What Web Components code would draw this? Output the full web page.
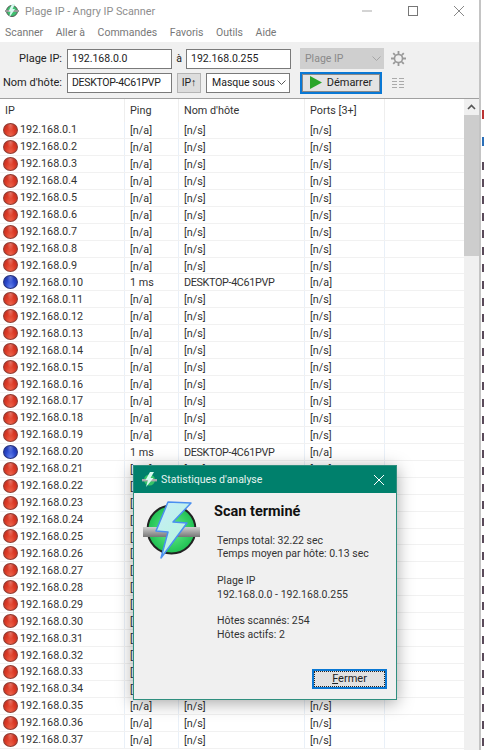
<!DOCTYPE html>
<html>
<head>
<meta charset="utf-8">
<title>Angry IP Scanner</title>
<style>
  html, body { margin: 0; height: 750px; overflow: hidden; background: #fff; }
  body { font: 10.5px Roboto, "Open Sans", sans-serif; color: #333; }
  #page { display: flex; height: 750px; position: relative; }
</style>
</head>
<body>
<div id="page">
  <ipscan-window></ipscan-window>
  <back-sliver></back-sliver>
  <scan-dialog></scan-dialog>
</div>

<script>
class IpscanWindow extends HTMLElement {
  connectedCallback() {
    this.attachShadow({ mode: 'open' }).innerHTML = `
      <style>
        :host { display: flex; flex-direction: column; width: 479px; height: 750px; background: #fff; }
        .title { height: 22px; display: flex; align-items: center; padding-left: 5px; gap: 6px; color: #8e8e8e; font-size: 10.8px; }
        .title .name { flex: 1; }
        .winbtn { width: 40px; height: 22px; display: flex; align-items: center; justify-content: center; }
        .menu { height: 20px; display: flex; align-items: center; padding-left: 5px; gap: 12.5px; color: #777; }
      </style>
      <div class="title">
        <svg width="14" height="14" viewBox="0 0 14 14"><circle cx="7" cy="7" r="5.5" fill="#3fbf6f" stroke="#555"/><rect x="0" y="6" width="14" height="2" fill="#999"/><path d="M7 0 L10 0 L7.5 5 L10 5 L4 14 L5.5 7.5 L3.5 7.5 Z" fill="#d7fbf0"/></svg>
        <span class="name">Plage IP - Angry IP Scanner</span>
        <span class="winbtn"><svg width="10" height="10"><rect y="4.5" width="10" height="1" fill="#aaa"/></svg></span>
        <span class="winbtn"><svg width="10" height="10"><rect x=".5" y=".5" width="9" height="9" fill="none" stroke="#777"/></svg></span>
        <span class="winbtn"><svg width="10" height="10"><path d="M0 0 L10 10 M10 0 L0 10" stroke="#888" fill="none"/></svg></span>
      </div>
      <div class="menu"><span>Scanner</span><span>Aller à</span><span>Commandes</span><span>Favoris</span><span>Outils</span><span>Aide</span></div>
      <scan-toolbar></scan-toolbar>
      <result-table></result-table>
    `;
  }
}

class ScanToolbar extends HTMLElement {
  connectedCallback() {
    this.attachShadow({ mode: 'open' }).innerHTML = `
      <style>
        :host { display: flex; flex-direction: column; gap: 3px; height: 56px; box-sizing: border-box; padding: 6px 0 0 0; background: #f0f0f0; color: #222; }
        .row { display: flex; align-items: center; height: 21px; white-space: nowrap; }
        .lbl { width: 62px; text-align: right; margin-right: 5px; font-size: 11px; }
        .inp { box-sizing: border-box; height: 20px; border: 1px solid #7a7a7a; background: #fff; padding: 0 4px; line-height: 18px; width: 105px; }
        .host { letter-spacing: -.3px; }
        .a { width: 14px; text-align: center; }
        .combo { box-sizing: border-box; height: 20px; border: 1px solid #7a7a7a; background: #fff; display: flex; align-items: center; justify-content: space-between; padding: 0 3px 0 5px; }
        .dis { width: 84px; height: 21px; margin-left: 9px; background: #cfcfcf; border: 0; color: #8a8a8a; }
        .ipup { box-sizing: border-box; width: 24px; height: 20px; margin: 0 5px 0 5px; background: #ddd; border: 1px solid #b4b4b4; text-align: center; line-height: 18px; }
        .start { box-sizing: border-box; width: 82px; height: 22px; margin-left: 10px; background: #e3e3e3; border: 2px solid #0a78d4; display: flex; align-items: center; justify-content: center; gap: 5px; font-size: 11px; outline: 1px solid #888; outline-offset: -3px; }
        svg { display: block; }
      </style>
      <div class="row">
        <span class="lbl">Plage IP:</span><span class="inp">192.168.0.0</span>
        <span class="a">à</span><span class="inp">192.168.0.255</span>
        <span class="combo dis">Plage IP
          <svg width="9" height="6"><path d="M.5 .5 L4.5 4.5 L8.5 .5" fill="none" stroke="#a5a5a5"/></svg></span>
        <svg style="margin-left:7px" width="15" height="15" viewBox="0 0 15 15"><circle cx="7.5" cy="7.5" r="4" fill="none" stroke="#999" stroke-width="1.6"/><path d="M7.5 0 V3 M7.5 12 V15 M0 7.5 H3 M12 7.5 H15 M2.2 2.2 L4.2 4.2 M10.8 10.8 L12.8 12.8 M12.8 2.2 L10.8 4.2 M4.2 10.8 L2.2 12.8" stroke="#999" stroke-width="1.8"/></svg>
      </div>
      <div class="row">
        <span class="lbl">Nom d'hôte:</span><span class="inp host">DESKTOP-4C61PVP</span>
        <span class="ipup">IP↑</span>
        <span class="combo" style="width:84px">Masque sous
          <svg width="9" height="6"><path d="M.5 .5 L4.5 4.5 L8.5 .5" fill="none" stroke="#555"/></svg></span>
        <span class="start">
          <svg width="12" height="13"><path d="M0 0 L12 6.5 L0 13 Z" fill="#2aa52a"/></svg>
          Démarrer</span>
        <svg style="margin-left:10px" width="12" height="10"><path d="M0 .5 H5 M7 .5 H12 M0 3.5 H5 M7 3.5 H12 M0 6.5 H5 M7 6.5 H12 M0 9.5 H5 M7 9.5 H12" stroke="#aaa"/></svg>
      </div>
    `;
  }
}

class ResultTable extends HTMLElement {
  connectedCallback() {
    const alive = { 10: 1, 20: 1 };
    let rows = '';
    for (let i = 1; i <= 37; i++) {
      const on = alive[i];
      rows += `<div class="r">
        <div class="c ip"><span class="dot ${on ? 'blue' : ''}"></span>192.168.0.${i}</div>
        <div class="c">${on ? '1 ms' : '[n/a]'}</div>
        <div class="c ${on ? 'host' : ''}">${on ? 'DESKTOP-4C61PVP' : '[n/s]'}</div>
        <div class="c">${on ? '[n/a]' : '[n/s]'}</div>
        <div></div>
      </div>`;
    }
    this.attachShadow({ mode: 'open' }).innerHTML = `
      <style>
        :host { display: flex; flex: 1; min-height: 0; border-top: 1px solid #a0a0a0; color: #333; overflow: hidden; }
        .list { flex: 1; min-width: 0; overflow: hidden; }
        .r { display: grid; grid-template-columns: 125px 54px 126px 80px 1fr; height: 16.94px; box-sizing: border-box; border-bottom: 1px solid #f1f1f1; line-height: 17px; white-space: nowrap; font-size: 10.8px; }
        .head { height: 23px; border-bottom: 0; line-height: 24px; }
        .c { padding-left: 5px; border-right: 1px solid #e9f0f8; overflow: hidden; }
        .host { letter-spacing: -.35px; }
        .head .c { border-right-color: #eee; }
        .ip { padding-left: 3px; display: flex; align-items: center; gap: 2px; }
        .dot { width: 15px; height: 14px; flex: none; border-radius: 50%; box-sizing: border-box; border: 1px solid #8f3a30;
          background: radial-gradient(ellipse at 50% 10%, rgba(255,255,255,.3) 0, transparent 38%), radial-gradient(ellipse at 50% 110%, #ee6a50 0, #dc3a26 55%, #b92a1e 100%); }
        .dot.blue { border-color: #24307e; background: radial-gradient(ellipse at 50% 10%, rgba(255,255,255,.3) 0, transparent 38%), radial-gradient(ellipse at 50% 110%, #6f8cf0 0, #2a48cc 55%, #1c2b94 100%); }
        .bar { width: 15px; flex: none; background: #f0f0f0; display: flex; flex-direction: column; }
        .bar .up { height: 16px; display: flex; align-items: center; justify-content: center; }
        .bar .thumb { height: 141px; background: #cdcdcd; }
      </style>
      <div class="list">
        <div class="r head"><div class="c">IP</div><div class="c">Ping</div><div class="c">Nom d'hôte</div><div class="c">Ports [3+]</div><div></div></div>
        ${rows}
      </div>
      <div class="bar">
        <div class="up"><svg width="9" height="6"><path d="M1 5 L4.5 1.5 L8 5" fill="none" stroke="#555" stroke-width="1.6"/></svg></div>
        <div class="thumb"></div>
      </div>
    `;
  }
}

class BackSliver extends HTMLElement {
  connectedCallback() {
    this.attachShadow({ mode: 'open' }).innerHTML = `
      <style>
        :host { display: flex; flex: 1; border-left: 2px solid #c4c4c4; background: #fff; }
        .ticks { flex: 1; margin: 110px 0 0 1px;
          background:
            linear-gradient(#b33 0 9px, transparent 9px) 0 0 / 100% 17px no-repeat,
            linear-gradient(#2a6fb8 0 9px, transparent 9px) 0 27px / 100% 17px no-repeat,
            repeating-linear-gradient(#5a4a5a 0 8px, transparent 8px 16.94px) 0 52px / 100% 100% no-repeat; }
      </style>
      <div class="ticks"></div>
    `;
  }
}

class ScanDialog extends HTMLElement {
  connectedCallback() {
    this.attachShadow({ mode: 'open' }).innerHTML = `
      <style>
        :host { position: absolute; left: 133px; top: 465px; width: 264px; height: 235px; box-sizing: border-box; display: flex; flex-direction: column; background: #f0f0f0; border: 1px solid #2f8f7f; box-shadow: 0 3px 16px rgba(0,0,0,.35); color: #333; }
        .tb { height: 27px; flex: none; background: #00806c; color: #e8f4f1; display: flex; align-items: center; padding-left: 8px; gap: 4px; }
        .tb .t { flex: 1; }
        .tb .x { width: 34px; display: flex; justify-content: center; }
        .body { flex: 1; display: grid; grid-template-columns: 80px 1fr; min-height: 0; position: relative; }
        .logo { padding: 7px 0 0 8px; }
        .txt { padding-top: 11px; line-height: 13.4px; }
        h1 { margin: 0 0 14px; font-size: 14.5px; font-weight: 700; color: #111; line-height: 16px; }
        .sec { margin-bottom: 13.4px; padding-left: 3px; }
        .btn { position: absolute; right: 9px; bottom: 10px; box-sizing: border-box; width: 75px; height: 20px; background: #e1e1e1; border: 2px solid #0a78d4; text-align: center; line-height: 16px; font-size: 11px; color: #222; outline: 1px dotted #222; outline-offset: -3px; }
      </style>
      <div class="tb">
        <svg width="15" height="15" viewBox="0 0 15 15"><circle cx="7.5" cy="8" r="5.5" fill="#35c467"/><rect x="0" y="7" width="15" height="2.4" fill="#aaa"/><path d="M8 0 L12 0 L8.5 6 L11.5 6 L4 15 L6 8 L3.5 8 Z" fill="#d8fbef"/></svg>
        <span class="t">Statistiques d'analyse</span>
        <span class="x"><svg width="10" height="10"><path d="M0 0 L10 10 M10 0 L0 10" stroke="#fff" fill="none"/></svg></span>
      </div>
      <div class="body">
        <div class="logo">
          <svg width="60" height="60" viewBox="0 0 60 60">
            <defs>
              <radialGradient id="g" cx=".5" cy=".5" r=".55"><stop offset="0" stop-color="#6cf08c"/><stop offset="1" stop-color="#16bb4c"/></radialGradient>
              <linearGradient id="b" x1="0" y1="0" x2=".6" y2="1"><stop offset="0" stop-color="#c6ecfc"/><stop offset="1" stop-color="#b8f6d8"/></linearGradient>
              <linearGradient id="p" x1="0" y1="0" x2="0" y2="1"><stop offset="0" stop-color="#cfcfcf"/><stop offset="1" stop-color="#777"/></linearGradient>
            </defs>
            <circle cx="29.5" cy="29.5" r="24" fill="url(#g)" stroke="#222" stroke-width="2"/>
            <rect x="1" y="27" width="57" height="10" fill="url(#p)"/>
            <path d="M26 2 L49 3 L31 22 L45 23 L19 58 L26 32 L14 31 Z" fill="url(#b)" stroke="#4a8ff0" stroke-width="1.5" stroke-linejoin="round"/>
          </svg>
        </div>
        <div class="txt">
          <h1>Scan terminé</h1>
          <div class="sec">Temps total: 32.22 sec<br>Temps moyen par hôte: 0.13 sec</div>
          <div class="sec">Plage IP<br>192.168.0.0 - 192.168.0.255</div>
          <div class="sec">Hôtes scannés: 254<br>Hôtes actifs: 2</div>
        </div>
        <div class="btn"><u>F</u>ermer</div>
      </div>
    `;
  }
}

customElements.define('ipscan-window', IpscanWindow);
customElements.define('scan-toolbar', ScanToolbar);
customElements.define('result-table', ResultTable);
customElements.define('back-sliver', BackSliver);
customElements.define('scan-dialog', ScanDialog);
</script>
</body>
</html>
